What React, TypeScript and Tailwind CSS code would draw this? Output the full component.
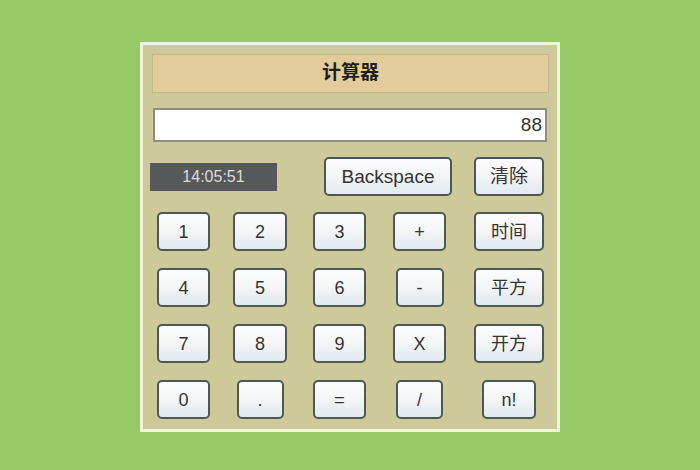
import React from "react";

const font = { fontFamily: '"Liberation Sans", "Noto Sans CJK SC", Arial, sans-serif' };

function Btn({ label, w, size = "text-[18px]" }: { label: string; w: string; size?: string }) {
  return (
    <button
      className={`${w} h-[39px] justify-self-center rounded-[5px] border-2 border-[#4c5854] bg-gradient-to-b from-[#fcfcfd] via-[#f3f5f7] to-[#e2e8ed] ${size} leading-none text-[#333333] shadow-[inset_0_1px_0_#ffffff]`}
      style={font}
    >
      {label}
    </button>
  );
}

export default function App() {
  const rows: { label: string; w: string }[][] = [
    [
      { label: "1", w: "w-[53px]" },
      { label: "2", w: "w-[54px]" },
      { label: "3", w: "w-[53px]" },
      { label: "+", w: "w-[53px]" },
      { label: "时间", w: "w-[70px]" },
    ],
    [
      { label: "4", w: "w-[53px]" },
      { label: "5", w: "w-[54px]" },
      { label: "6", w: "w-[53px]" },
      { label: "-", w: "w-[48px]" },
      { label: "平方", w: "w-[70px]" },
    ],
    [
      { label: "7", w: "w-[53px]" },
      { label: "8", w: "w-[54px]" },
      { label: "9", w: "w-[53px]" },
      { label: "X", w: "w-[53px]" },
      { label: "开方", w: "w-[70px]" },
    ],
    [
      { label: "0", w: "w-[53px]" },
      { label: ".", w: "w-[47px]" },
      { label: "=", w: "w-[53px]" },
      { label: "/", w: "w-[47px]" },
      { label: "n!", w: "w-[54px]" },
    ],
  ];

  return (
    <div className="w-[700px] h-[470px] bg-[#97c967] pt-[42px] pl-[140px]" style={font}>
      <div className="w-[420px] h-[390px] border-[3px] border-[#eef6dc] bg-[#cdc999] flex flex-col">
        <div className="mt-[9px] ml-[9px] w-[397px] h-[39px] border border-[#c2b88a] bg-[#e3cc9b] flex items-center justify-center">
          <span className="text-[19px] font-bold text-[#1e1e1e]">计算器</span>
        </div>
        <div className="mt-[15px] ml-[10px] w-[394px] h-[34px] border-2 border-[#8e8e80] bg-white flex items-center justify-end pr-[3px]">
          <span className="text-[19px] text-[#333333]">88</span>
        </div>
        <div className="mt-[15px] ml-[7px] flex items-center h-[39px]">
          <div className="w-[127px] h-[28px] bg-[#56585a] flex items-center justify-center text-[16px] text-[#dcdcdc]">
            14:05:51
          </div>
          <div className="ml-[47px]">
            <Btn label="Backspace" w="w-[128px]" size="text-[19px]" />
          </div>
          <div className="ml-[22px]">
            <Btn label="清除" w="w-[70px]" size="text-[19px]" />
          </div>
        </div>
        <div className="mt-[16px] ml-[2px] grid grid-cols-[77px_76px_83px_77px_102px] gap-y-[17px]">
          {rows.flat().map((b, i) => (
            <Btn key={i} label={b.label} w={b.w} />
          ))}
        </div>
      </div>
    </div>
  );
}
